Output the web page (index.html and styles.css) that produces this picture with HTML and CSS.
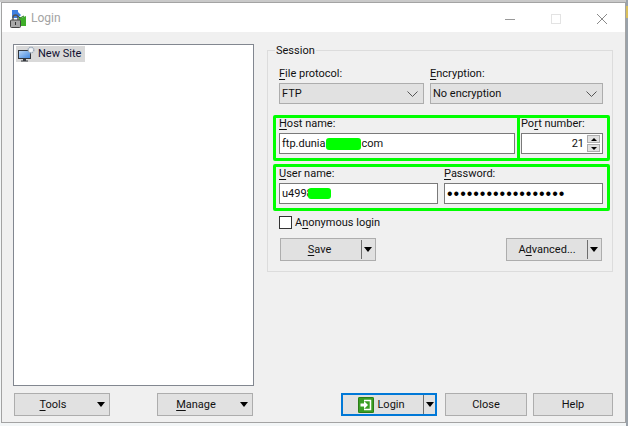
FILE: index.html
```html
<!DOCTYPE html>
<html lang="en">
<head>
<meta charset="utf-8">
<title>Login</title>
<link rel="stylesheet" href="styles.css">
</head>
<body>
<div class="window">
  <header class="titlebar">
    <svg class="app-icon" width="17" height="18" viewBox="0 0 17 18">
      <path d="M2 0h6v2l3 3-3 3H2z" fill="#3f7fe0"/>
      <path d="M9 7l2 1 5-2v10H9z" fill="#3fae2a"/>
      <path d="M7 5l3 3 4-2" fill="none" stroke="#1f6f14" stroke-width="1"/>
      <path d="M3 10V7.500a2.500 2.500 0 0 1 5 0V10" fill="none" stroke="#555" stroke-width="1.400"/>
      <rect x="0.500" y="10" width="10" height="7.500" rx="1" fill="#a8a8a8" stroke="#444"/>
      <rect x="5" y="12" width="1" height="3" fill="#333"/>
    </svg>
    <span class="app-title">Login</span>
    <div class="controls">
      <svg width="12" height="12" viewBox="0 0 12 12"><path d="M1 6.500h10" stroke="#999" fill="none"/></svg>
      <svg width="12" height="12" viewBox="0 0 12 12"><rect x="1.500" y="1.500" width="9" height="9" stroke="#e3e3e3" fill="none"/></svg>
      <svg width="12" height="12" viewBox="0 0 12 12"><path d="M1 1l10 10M11 1L1 11" stroke="#8a8a8a" fill="none"/></svg>
    </div>
  </header>

  <main class="content">
    <section class="left">
      <div class="site-list">
        <div class="site-item">
          <svg width="17" height="16" viewBox="0 0 17 16">
            <defs>
              <linearGradient id="screen" x1="0" y1="0" x2="1" y2="1">
                <stop offset="0" stop-color="#bcd8f7"/>
                <stop offset="1" stop-color="#3f86de"/>
              </linearGradient>
            </defs>
            <rect x="0.500" y="4.500" width="12" height="8" fill="url(#screen)" stroke="#33373d"/>
            <path d="M5 13h3v1.500h2v1H3v-1h2z" fill="#33373d"/>
            <circle cx="13" cy="4" r="2.800" fill="#f4f6f8" stroke="#9aa8b8" stroke-width="1.500" stroke-dasharray="1.500 0.700"/>
          </svg>
          <span>New Site</span>
        </div>
      </div>
      <div class="left-buttons">
        <button class="btn menu-btn"><span class="btn-label"><span><u>T</u>ools</span></span><i class="arrow"></i></button>
        <button class="btn menu-btn"><span class="btn-label"><span><u>M</u>anage</span></span><i class="arrow"></i></button>
      </div>
    </section>

    <section class="right">
      <fieldset class="session">
        <legend>Session</legend>
        <div class="row row-protocol">
          <div class="field">
            <label><u>F</u>ile protocol:</label>
            <div class="select"><span>FTP</span><svg width="11" height="6" viewBox="0 0 11 6"><path d="M.5.5l5 5 5-5" fill="none" stroke="#555"/></svg></div>
          </div>
          <div class="field">
            <label><u>E</u>ncryption:</label>
            <div class="select"><span>No encryption</span><svg width="11" height="6" viewBox="0 0 11 6"><path d="M.5.5l5 5 5-5" fill="none" stroke="#555"/></svg></div>
          </div>
        </div>
        <div class="row row-host">
          <div class="field">
            <label><u>H</u>ost name:</label>
            <div class="input"><span>ftp.dunia</span><span class="blot blot-host"></span><span>com</span></div>
          </div>
          <div class="field">
            <label>Po<u>r</u>t number:</label>
            <div class="input port">
              <span>21</span>
              <div class="spinner">
                <span class="spin"><i class="tri-up"></i></span>
                <span class="spin"><i class="tri-down"></i></span>
              </div>
            </div>
          </div>
        </div>
        <div class="row row-user">
          <div class="field">
            <label><u>U</u>ser name:</label>
            <div class="input"><span>u4998</span><span class="blot blot-user"></span></div>
          </div>
          <div class="field">
            <label><u>P</u>assword:</label>
            <div class="input password">••••••••••••••••••</div>
          </div>
        </div>
        <div class="check-row">
          <span class="checkbox"></span>
          <span>A<u>n</u>onymous login</span>
        </div>
        <div class="session-buttons">
          <button class="btn split"><span class="btn-label save-label"><span><u>S</u>ave</span></span><i class="sep"></i><i class="arrow"></i></button>
          <button class="btn split"><span class="btn-label"><span>A<u>d</u>vanced...</span></span><i class="sep"></i><i class="arrow"></i></button>
        </div>
      </fieldset>

      <div class="dialog-buttons">
        <button class="btn split login">
          <span class="btn-label">
            <svg width="16" height="16" viewBox="0 0 16 16">
              <rect width="16" height="16" rx="1.500" fill="#3a9e23"/>
              <rect x="0.500" y="0.500" width="15" height="15" rx="1" fill="none" stroke="#2b7c18"/>
              <path d="M6 3.500h6.500v9H6" fill="none" stroke="#fff" stroke-width="1.500"/>
              <path d="M2.500 6.500H6V4l4 4-4 4V9.500H2.500z" fill="#fff"/>
            </svg>
            <span>Login</span>
          </span><i class="sep"></i><i class="arrow"></i>
        </button>
        <button class="btn close-btn"><span class="btn-text">Close</span></button>
        <button class="btn help-btn"><span class="btn-text">Help</span></button>
      </div>
    </section>
  </main>

  <div class="mark mark-host"></div>
  <div class="mark mark-port"></div>
  <div class="mark mark-user"></div>
</div>
</body>
</html>
```

FILE: styles.css
```css
* { box-sizing: border-box; }

html, body { height: 100%; }

body {
  margin: 0;
  padding: 2px 2px 3px 1px;
  overflow: hidden;
  background:
    linear-gradient(#d9bf5c, #d9bf5c) right 6px / 2px 12px no-repeat,
    linear-gradient(#9aa2aa, #9aa2aa) right top / 2px 100% no-repeat,
    linear-gradient(#c9c9c9, #c9c9c9) left top / 100% 2px no-repeat,
    #f3f6f7;
  font: 11px/16px Roboto, "Liberation Sans", sans-serif;
  color: #111;
}

u { text-underline-offset: 2px; text-decoration-thickness: 1px; }

.window {
  position: relative;
  width: 625px;
  height: 421px;
  border: 1px solid #a3a3a3;
  background: #f0f0f0;
  display: flex;
  flex-direction: column;
}

.titlebar {
  height: 29px;
  flex: none;
  background: #fff;
  display: flex;
  align-items: center;
  padding-left: 8px;
}

.app-icon { flex: none; margin-top: 2px; }

.app-title {
  margin-left: 4px;
  color: #a3a3a3;
  font-size: 12px;
  margin-top: 1px;
}

.controls {
  margin-left: auto;
  margin-right: 17px;
  display: flex;
  gap: 34px;
  margin-top: 3px;
}

.content {
  flex: 1;
  display: flex;
  gap: 13px;
  padding: 12px 11px 6px;
}

.left {
  width: 241px;
  display: flex;
  flex-direction: column;
  gap: 7px;
}

.site-list {
  flex: 1;
  background: #fff;
  border: 1px solid #828790;
  padding: 1px 2px;
}

.site-item {
  width: 69px;
  height: 16px;
  background: #d9d9d9;
  display: flex;
  align-items: center;
  gap: 3px;
  padding-left: 2px;
  color: #101030;
  white-space: nowrap;
}

.site-item svg { flex: none; }

.left-buttons {
  display: flex;
  justify-content: space-between;
  padding: 0 1px;
}

.btn {
  height: 23px;
  border: 1px solid #adadad;
  background: #e1e1e1;
  font: inherit;
  color: #111;
  padding: 0;
  display: flex;
  align-items: center;
}

.btn-label {
  flex: 1;
  min-width: 0;
  display: flex;
  align-items: center;
  justify-content: center;
  gap: 4px;
  padding-top: 1px;
}

.btn-text { padding-top: 1px; }

.save-label { padding-right: 3px; }

.menu-btn { width: 96px; padding-right: 4px; }
.menu-btn .btn-label { padding-right: 6px; }

.arrow {
  flex: none;
  width: 0;
  height: 0;
  border-left: 4.500px solid transparent;
  border-right: 4.500px solid transparent;
  border-top: 5px solid #000;
}

.sep {
  flex: none;
  width: 1px;
  height: 19px;
  background: #6e6e6e;
  margin-right: 2px;
}

.split { width: 96px; padding-right: 3px; }

.right {
  width: 346px;
  display: flex;
  flex-direction: column;
  justify-content: space-between;
}

.session {
  margin: 0;
  padding: 9px 9px 10px 11px;
  border: 1px solid #dcdcdc;
  height: 228px;
}

.session legend {
  padding: 1px 1px 0;
  margin-left: -4px;
  line-height: 12px;
}

.row { display: flex; gap: 6px; margin-bottom: 12px; }

.row-protocol .field:first-child { width: 145px; }
.row-protocol .field:last-child { width: 173px; }
.row-host .field:first-child { width: 236px; }
.row-host .field:last-child { width: 82px; }
.row-user .field { width: 159px; }

.field label {
  display: block;
  height: 17px;
  white-space: nowrap;
  line-height: 15px;
}

.select {
  height: 21px;
  background: #e1e1e1;
  border: 1px solid #adadad;
  display: flex;
  align-items: center;
  justify-content: space-between;
  padding: 0 5px 0 2px;
}

.input {
  height: 21px;
  background: #fff;
  border: 1px solid #7a7a7a;
  padding: 0 2px;
  display: flex;
  align-items: center;
  white-space: pre;
}

.blot {
  display: block;
  flex: none;
  background: #00ff00;
  border-radius: 3px;
}
.blot-host { width: 35px; height: 12px; margin-right: 1px; }
.blot-user { width: 23px; height: 11px; margin-left: -5px; }

.port { padding-right: 2px; justify-content: flex-end; gap: 3px; }

.spinner {
  display: flex;
  flex-direction: column;
  gap: 1px;
}

.spin {
  width: 13px;
  height: 8px;
  background: #e1e1e1;
  border: 1px solid #adadad;
  display: flex;
  align-items: center;
  justify-content: center;
}

.tri-up, .tri-down {
  width: 0;
  height: 0;
  border-left: 3.500px solid transparent;
  border-right: 3.500px solid transparent;
}
.tri-up { border-bottom: 3px solid #000; }
.tri-down { border-top: 3px solid #000; }

.password {
  font: 16px/16px "Liberation Sans", sans-serif;
  letter-spacing: 0.970px;
  color: #000;
}

.check-row {
  display: flex;
  align-items: center;
  gap: 3px;
  height: 13px;
  margin-bottom: 9px;
}

.checkbox {
  width: 13px;
  height: 13px;
  background: #fff;
  border: 1px solid #333;
}

.session-buttons {
  display: flex;
  justify-content: space-between;
  padding: 0 1px;
}

.dialog-buttons {
  display: flex;
  justify-content: flex-end;
  gap: 6px;
}

.login {
  border: 2px solid #0078d7;
  margin-right: 2px;
  padding-right: 1px;
}

.login .btn-label { padding-right: 3px; gap: 3px; }

.close-btn, .help-btn { justify-content: center; }
.close-btn { width: 82px; }
.help-btn { width: 80px; }

.mark {
  position: absolute;
  border: 3px solid #00ff00;
  border-radius: 2px;
  pointer-events: none;
}
.mark-host { left: 271px; top: 112px; width: 247px; height: 46px; }
.mark-port { left: 515px; top: 112px; width: 93px; height: 46px; }
.mark-user { left: 271px; top: 161px; width: 337px; height: 47px; }
```
